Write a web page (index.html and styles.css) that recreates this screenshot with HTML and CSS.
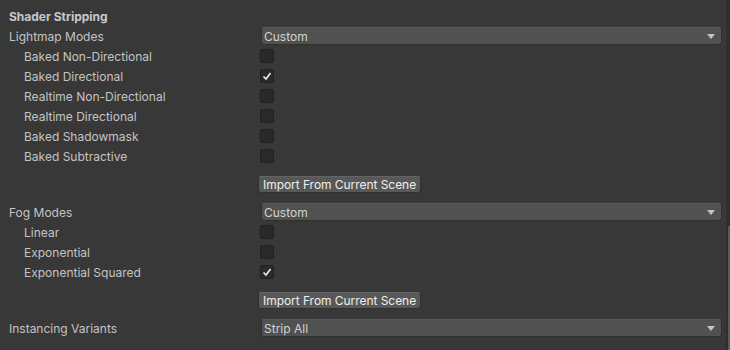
FILE: index.html
```html
<!DOCTYPE html>
<html lang="en">
<head>
    <meta charset="UTF-8">
    <title>Shader Stripping</title>
    <link rel="stylesheet" href="styles.css">
</head>
<body>
    <div class="inspector">
        <div class="panel">
            <div class="header">Shader Stripping</div>

            <div class="row">
                <div class="label">Lightmap Modes</div>
                <div class="field"><div class="dropdown"><span>Custom</span><i class="arrow"></i></div></div>
            </div>
            <div class="row sub">
                <div class="label">Baked Non-Directional</div>
                <div class="field"><span class="check"></span></div>
            </div>
            <div class="row sub">
                <div class="label">Baked Directional</div>
                <div class="field"><span class="check on"><svg viewBox="0 0 12 12"><polyline points="2.5,6.5 5,9 9.5,3"/></svg></span></div>
            </div>
            <div class="row sub">
                <div class="label">Realtime Non-Directional</div>
                <div class="field"><span class="check"></span></div>
            </div>
            <div class="row sub">
                <div class="label">Realtime Directional</div>
                <div class="field"><span class="check"></span></div>
            </div>
            <div class="row sub">
                <div class="label">Baked Shadowmask</div>
                <div class="field"><span class="check"></span></div>
            </div>
            <div class="row sub">
                <div class="label">Baked Subtractive</div>
                <div class="field"><span class="check"></span></div>
            </div>
            <div class="row action">
                <div class="label"></div>
                <div class="field"><button class="btn">Import From Current Scene</button></div>
            </div>

            <div class="row gap">
                <div class="label">Fog Modes</div>
                <div class="field"><div class="dropdown"><span>Custom</span><i class="arrow"></i></div></div>
            </div>
            <div class="row sub">
                <div class="label">Linear</div>
                <div class="field"><span class="check"></span></div>
            </div>
            <div class="row sub">
                <div class="label">Exponential</div>
                <div class="field"><span class="check"></span></div>
            </div>
            <div class="row sub">
                <div class="label">Exponential Squared</div>
                <div class="field"><span class="check on"><svg viewBox="0 0 12 12"><polyline points="2.5,6.5 5,9 9.5,3"/></svg></span></div>
            </div>
            <div class="row action">
                <div class="label"></div>
                <div class="field"><button class="btn">Import From Current Scene</button></div>
            </div>

            <div class="row gap">
                <div class="label">Instancing Variants</div>
                <div class="field"><div class="dropdown"><span>Strip All</span><i class="arrow"></i></div></div>
            </div>
        </div>
        <div class="scrollbar"><div class="thumb"></div></div>
    </div>
</body>
</html>
```

FILE: styles.css
```css
body {
    margin: 0;
    background-color: #383838;
    font-family: 'Inter', 'Noto Sans', sans-serif;
    font-size: 12px;
    color: #c4c4c4;
}
.inspector {
    display: flex;
    height: 350px;
    overflow: hidden;
}
.panel {
    flex: 1;
    padding: 0 4px 0 9px;
}
.header {
    height: 26px;
    line-height: 34px;
    font-weight: bold;
    color: #c8c8c8;
}
.row {
    display: flex;
    align-items: center;
    height: 20px;
}
.row.sub {
    padding-left: 15px;
}
.row.sub .label {
    width: 236px;
}
.row.action {
    margin-top: 8px;
}
.row.gap {
    margin-top: 8px;
}
.label {
    width: 251px;
    flex-shrink: 0;
    white-space: nowrap;
}
.field {
    flex: 1;
    display: flex;
    align-items: center;
}
.dropdown {
    flex: 1;
    height: 16px;
    margin-left: 1px;
    display: flex;
    align-items: center;
    justify-content: space-between;
    padding: 0 6px 0 2px;
    background-color: #515151;
    border: 1px solid #303030;
    border-top-color: #5a5a5a;
    border-radius: 3px;
    color: #d2d2d2;
}
.arrow {
    width: 0;
    height: 0;
    border-left: 4px solid transparent;
    border-right: 4px solid transparent;
    border-top: 5px solid #c4c4c4;
}
.check {
    width: 12px;
    height: 12px;
    background-color: #2a2a2a;
    border: 1px solid #212121;
    border-radius: 2px;
    display: flex;
}
.check svg {
    width: 12px;
    height: 12px;
}
.check polyline {
    fill: none;
    stroke: #eaeaea;
    stroke-width: 1.7;
}
.btn {
    height: 17px;
    margin-left: -2px;
    padding: 0 4px;
    background-color: #585858;
    border: 1px solid #303030;
    border-top-color: #646464;
    border-radius: 3px;
    font-family: 'Inter', 'Noto Sans', sans-serif;
    font-size: 12px;
    letter-spacing: -0.05px;
    color: #eeeeee;
}
.scrollbar {
    width: 4px;
    background-color: #2f2f2f;
    display: flex;
    flex-direction: column;
    justify-content: flex-end;
}
.thumb {
    height: 124px;
    margin-left: 2px;
    background-color: #5a5a5a;
}
```
